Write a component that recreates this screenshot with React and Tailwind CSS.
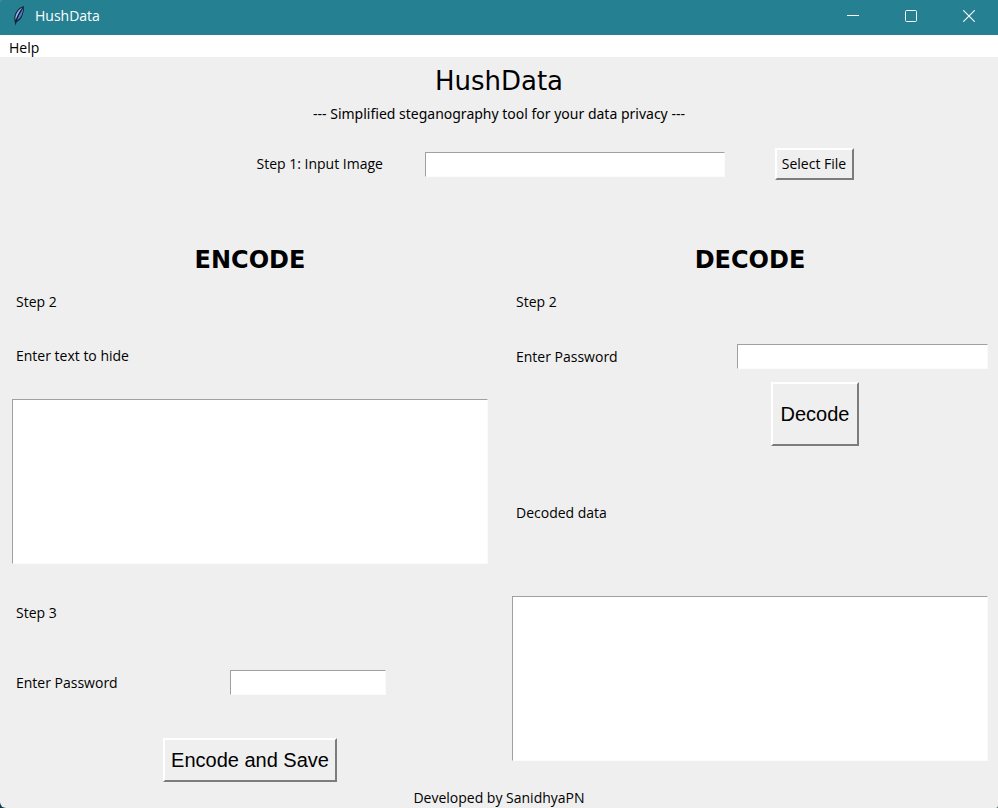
import React from "react";

const fieldBase =
  "block resize-none rounded-none border border-t-[#a0a0a0] border-l-[#a0a0a0] border-r-[#fbfbfb] border-b-[#fbfbfb] bg-white outline-none";
const buttonBase =
  "rounded-none border-2 border-t-white border-l-white border-r-[#7c7c7c] border-b-[#7c7c7c] bg-[#efefef] text-black";

function Field({ id, className, type = "text" }) {
  return <input id={id} type={type} className={`${fieldBase} h-[25px] px-1 ${className}`} />;
}

function Feather() {
  return (
    <svg width="14" height="22" viewBox="0 0 14 22" aria-hidden="true">
      <path
        d="M11.6 1C8.4 1.8 5 5 3.4 8.6c-1 2.4-1.400 5.200-.7 8l.9 4.200.8-3.800c3.600-1.500 5.400-4 6.200-7.200C11.500 6.600 12.800 4 11.600 1z"
        fill="#14202c"
      />
      <path d="M10.900 2C8 3.600 5 6.600 4 9.800c-.6 1.800-.8 3.600-.4 5.200C5.200 11 7.600 6.200 10.900 2z" fill="#8fb4ee" />
      <path d="M11.300 2.800C9 7 6.400 11.200 4.800 15.600c2.800-1.600 4.400-3.800 5.100-6.400.6-2.200 1.400-4 1.400-6.400z" fill="#4a7bd0" />
      <path d="M10.800 2.400C7.600 7 5 12 3.800 18.500" fill="none" stroke="#14202c" strokeWidth=".7" />
    </svg>
  );
}

function TitleBar() {
  return (
    <header className="flex h-[35px] items-center justify-between bg-[#258192] pl-3 text-white">
      <div className="flex items-center gap-[9px] pb-1">
        <Feather />
        <span className="leading-5">HushData</span>
      </div>
      <div className="flex h-full pb-[3px]">
        <button type="button" aria-label="Minimize" className="flex w-[58px] items-center justify-center">
          <svg width="12" height="12" viewBox="0 0 12 12">
            <path d="M0 5.500h12" stroke="white" />
          </svg>
        </button>
        <button type="button" aria-label="Maximize" className="flex w-[58px] items-center justify-center">
          <svg width="12" height="12" viewBox="0 0 12 12">
            <rect x=".5" y=".5" width="11" height="11" rx="1" fill="none" stroke="white" />
          </svg>
        </button>
        <button type="button" aria-label="Close" className="flex w-[58px] items-center justify-center">
          <svg width="12" height="12" viewBox="0 0 12 12">
            <path d="M.3.300l11.400 11.400M11.700.300L.3 11.700" stroke="white" strokeWidth="1.100" />
          </svg>
        </button>
      </div>
    </header>
  );
}

function Heading({ children }) {
  return (
    <h2 className="text-center font-['DejaVu_Sans',sans-serif] text-2xl leading-8 font-bold">{children}</h2>
  );
}

function EncodePane() {
  return (
    <section>
      <Heading>ENCODE</Heading>
      <p className="mt-4 pl-1 leading-5">Step 2</p>
      <label htmlFor="secret" className="mt-[34px] block pl-1 leading-5">
        Enter text to hide
      </label>
      <textarea id="secret" className={`${fieldBase} mt-[33px] h-[165px] w-full p-1`} />
      <p className="mt-[39px] pl-1 leading-5">Step 3</p>
      <div className="mt-[47px] flex items-center">
        <label htmlFor="encode-password" className="w-[218px] pl-1 leading-5">
          Enter Password
        </label>
        <Field id="encode-password" type="password" className="w-[156px]" />
      </div>
      <div className="mt-[43px] flex justify-center">
        <button type="button" className={`${buttonBase} h-11 px-[6px] font-['Liberation_Sans',sans-serif] text-xl`}>
          Encode and Save
        </button>
      </div>
    </section>
  );
}

function DecodePane() {
  return (
    <section>
      <Heading>DECODE</Heading>
      <p className="mt-4 pl-1 leading-5">Step 2</p>
      <div className="mt-8 flex items-center justify-between">
        <label htmlFor="decode-password" className="pl-1 leading-5">
          Enter Password
        </label>
        <Field id="decode-password" type="password" className="w-[251px]" />
      </div>
      <div className="mt-[13px] flex justify-end pr-[129px]">
        <button type="button" className={`${buttonBase} h-16 w-[88px] font-['Liberation_Sans',sans-serif] text-xl`}>
          Decode
        </button>
      </div>
      <label htmlFor="decoded" className="mt-[57px] block pl-1 leading-5">
        Decoded data
      </label>
      <textarea id="decoded" className={`${fieldBase} mt-[73px] h-[165px] w-full p-1`} />
    </section>
  );
}

export default function App() {
  return (
    <div className="flex min-h-screen bg-[#0b3f49] font-['Open_Sans',sans-serif] text-sm text-black">
      <div className="flex grow flex-col overflow-hidden rounded-tl-xs rounded-br-xs rounded-bl-md bg-[#efefef]">
        <TitleBar />
        <nav className="flex h-[22px] items-center bg-white px-[9px] pt-1">
          <button type="button" className="leading-5">
            Help
          </button>
        </nav>
        <main>
          <h1 className="pt-[6px] text-center font-['DejaVu_Sans',sans-serif] text-[26px] leading-9">HushData</h1>
          <p className="mt-[5px] text-center font-['Noto_Sans',sans-serif] leading-5">
            --- Simplified steganography tool for your data privacy ---
          </p>
          <div className="mt-6 flex items-center justify-center pl-[112px]">
            <label htmlFor="image" className="mr-10 w-[128px] leading-5 whitespace-nowrap">
              Step 1: Input Image
            </label>
            <Field id="image" className="mr-[50px] w-[300px]" />
            <button type="button" className={`${buttonBase} h-8 w-[79px] leading-5 whitespace-nowrap`}>
              Select File
            </button>
          </div>
          <div className="mt-16 grid grid-cols-2 gap-6 pr-[10px] pl-3">
            <EncodePane />
            <DecodePane />
          </div>
        </main>
        <footer className="mt-[6px] text-center leading-5">Developed by SanidhyaPN</footer>
      </div>
    </div>
  );
}
